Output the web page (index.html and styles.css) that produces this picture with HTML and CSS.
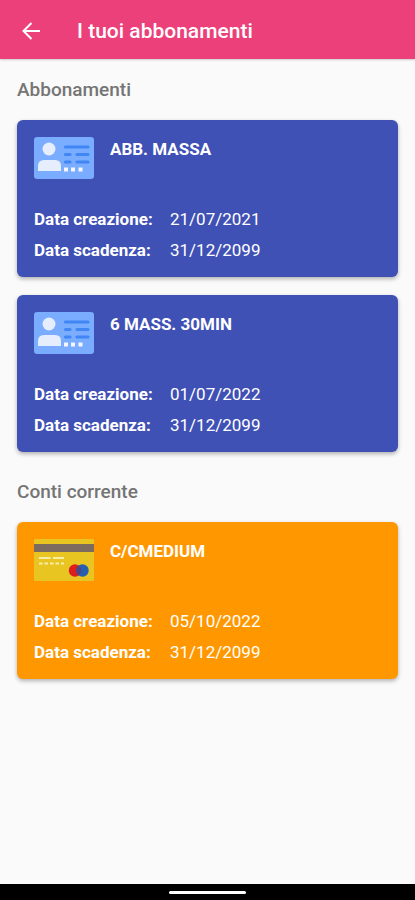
FILE: index.html
```html
<!DOCTYPE html>
<html lang="it">
<head>
    <meta charset="UTF-8">
    <meta name="viewport" content="width=device-width, initial-scale=1.0">
    <title>I tuoi abbonamenti</title>
    <link rel="stylesheet" href="styles.css">
</head>
<body>
    <!-- shared icon -->
    <svg class="symbols" width="0" height="0" aria-hidden="true">
        <symbol id="id-card" viewBox="0 0 60 42">
            <rect width="60" height="42" rx="3" fill="#7aadff"/>
            <circle cx="15" cy="12" r="6.5" fill="#e6edfc"/>
            <path d="M4 34v-5q0-6 6-6h11q6 0 6 6v5z" fill="#e6edfc"/>
            <path d="M31.500 10H54M31.500 17.500H36M43 17.500H54M31.500 25H36M43 25H54" fill="none" stroke="#4086f4" stroke-width="3.200" stroke-linecap="round"/>
            <path d="M30 30.500h4v4h-4zM37 30.500h4v4h-4zM44.500 30.500h4v4h-4z" fill="#f4f7ff"/>
        </symbol>
    </svg>

    <header class="topbar">
        <button class="back" type="button" aria-label="Indietro">
            <svg width="18" height="18" viewBox="0 0 18 18" fill="none" stroke="currentColor" stroke-width="2">
                <path d="M18 9H2M9.500 1L1.500 9l8 8"/>
            </svg>
        </button>
        <h1>I tuoi abbonamenti</h1>
    </header>

    <main>
        <section>
            <h2>Abbonamenti</h2>
            <article class="card">
                <div class="card-head">
                    <svg class="icon" aria-hidden="true"><use href="#id-card"/></svg>
                    <h3>ABB. MASSA</h3>
                </div>
                <dl>
                    <dt>Data creazione:</dt>
                    <dd>21/07/2021</dd>
                    <dt>Data scadenza:</dt>
                    <dd>31/12/2099</dd>
                </dl>
            </article>
            <article class="card">
                <div class="card-head">
                    <svg class="icon" aria-hidden="true"><use href="#id-card"/></svg>
                    <h3>6 MASS. 30MIN</h3>
                </div>
                <dl>
                    <dt>Data creazione:</dt>
                    <dd>01/07/2022</dd>
                    <dt>Data scadenza:</dt>
                    <dd>31/12/2099</dd>
                </dl>
            </article>
        </section>

        <section>
            <h2>Conti corrente</h2>
            <article class="card account">
                <div class="card-head">
                    <svg class="icon" viewBox="0 0 60 42" aria-hidden="true">
                        <rect width="60" height="42" rx="1.500" fill="#e9c522"/>
                        <rect y="5" width="60" height="8" fill="#7d6b60"/>
                        <path d="M5 19h11.500M19 19h11" stroke="#f7eda9" stroke-width="2"/>
                        <path d="M5 24.500h25" stroke="#f7eda9" stroke-width="2" stroke-dasharray="3.500 2"/>
                        <circle cx="41" cy="31.500" r="6.200" fill="#dc1f1c"/>
                        <circle cx="48.500" cy="31.500" r="6.200" fill="#2560b0"/>
                        <path d="M44.800 26.500a6.200 6.200 0 0 1 0 10a6.200 6.200 0 0 1 0-10z" fill="#4c4586"/>
                    </svg>
                    <h3>C/CMEDIUM</h3>
                </div>
                <dl>
                    <dt>Data creazione:</dt>
                    <dd>05/10/2022</dd>
                    <dt>Data scadenza:</dt>
                    <dd>31/12/2099</dd>
                </dl>
            </article>
        </section>
    </main>

    <footer class="navbar">
        <span class="handle"></span>
    </footer>
</body>
</html>
```
FILE: styles.css
```css
* {
    box-sizing: border-box;
}
body {
    display: flex;
    flex-direction: column;
    min-height: 100vh;
    margin: 0;
    background: #fafafa;
    font-family: Roboto, "Liberation Sans", sans-serif;
}
h1, h2, h3, dl, dd {
    margin: 0;
}
.symbols {
    position: absolute;
}
.topbar {
    display: flex;
    align-items: center;
    gap: 28px;
    height: 59px;
    padding: 2px 13px 0;
    background: #ec407a;
    color: white;
    box-shadow: 0 1px 2px rgba(0, 0, 0, 0.2);
}
.back {
    display: flex;
    align-items: center;
    justify-content: center;
    width: 36px;
    height: 36px;
    padding: 0;
    border: none;
    background: none;
    color: inherit;
    cursor: pointer;
}
h1 {
    font-size: 21px;
    font-weight: 500;
    line-height: 28px;
}
main {
    flex: 1;
    padding: 18px 17px;
}
section {
    margin-bottom: 27px;
}
h2 {
    margin-bottom: 17px;
    color: #757575;
    font-size: 19px;
    font-weight: 500;
    line-height: 26px;
}
.card {
    margin-bottom: 18px;
    padding: 17px 17px 11px;
    border-radius: 6px;
    background: #3f51b5;
    color: white;
    box-shadow: 0 2px 4px rgba(0, 0, 0, 0.3);
}
.account {
    background: #ff9800;
}
.card-head {
    display: flex;
    gap: 16px;
    margin-bottom: 25px;
}
.icon {
    width: 60px;
    height: 42px;
}
h3 {
    font-size: 17px;
    font-weight: 700;
    line-height: 24px;
}
dl {
    display: grid;
    grid-template-columns: 120px 1fr;
    column-gap: 16px;
    font-size: 17px;
    line-height: 31px;
}
dt {
    font-weight: 700;
}
.navbar {
    display: flex;
    align-items: center;
    justify-content: center;
    height: 16px;
    background: black;
}
.handle {
    width: 77px;
    height: 3px;
    border-radius: 2px;
    background: white;
}
```
